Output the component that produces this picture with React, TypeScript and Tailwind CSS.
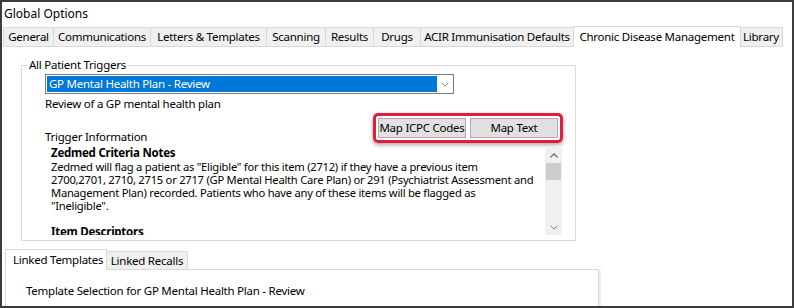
import React from "react";

const tabs = [
  { label: "General", w: "w-[51px]" },
  { label: "Communications", w: "w-[98px]" },
  { label: "Letters & Templates", w: "w-[117px]" },
  { label: "Scanning", w: "w-[60px]" },
  { label: "Results", w: "w-[49px]" },
  { label: "Drugs", w: "w-[48px]" },
  { label: "ACIR Immunisation Defaults", w: "w-[154px]" },
  { label: "Chronic Disease Management", w: "w-[168px]", active: true },
  { label: "Library", w: "w-[44px]" },
];

const noteLines = [
  'Zedmed will flag a patient as "Eligible" for this item (2712) if they have a previous item',
  "2700,2701, 2710, 2715 or 2717 (GP Mental Health Care Plan) or 291 (Psychiatrist Assessment and",
  "Management Plan) recorded. Patients who have any of these items will be flagged as",
  '"Ineligible".',
];

function Chevron({ dir = "down", className = "" }: { dir?: "up" | "down"; className?: string }) {
  return (
    <svg className={className} viewBox="0 0 10 6" fill="none" stroke="currentColor">
      <path
        d={dir === "down" ? "M1 1l4 4 4-4" : "M1 5l4-4 4 4"}
        strokeWidth={dir === "down" ? "1" : "1.6"}
        strokeLinecap="round"
        strokeLinejoin="round"
      />
    </svg>
  );
}

export default function App() {
  return (
    <div className="w-[794px] h-[308px] overflow-hidden bg-white border-2 border-[#3c3c3c] flex flex-col font-['Noto_Sans',sans-serif] text-[11.5px] tracking-[-0.25px] text-black">
      {/* Title */}
      <div className="h-[24px] shrink-0 flex items-center pl-[2px] text-[12px] tracking-normal leading-[16px]">
        Global Options
      </div>

      {/* Main tab strip */}
      <div className="h-[21px] shrink-0 flex items-end pl-px">
        {tabs.map((t) =>
          t.active ? (
            <div
              key={t.label}
              className={`${t.w} h-[21px] -mx-px relative z-10 bg-white border-x border-t border-[#d9d9d9] flex items-start justify-center pt-[2px] leading-[16px] whitespace-nowrap`}
            >
              {t.label}
            </div>
          ) : (
            <div
              key={t.label}
              className={`${t.w} h-[20px] bg-[#f0f0f0] border border-[#d9d9d9] -ml-px first:ml-0 flex items-center justify-center leading-[16px] whitespace-nowrap`}
            >
              {t.label}
            </div>
          )
        )}
      </div>

      {/* Tab page */}
      <div className="flex-1 flex flex-col">
        <fieldset className="ml-[19px] mt-[10px] w-[555px] min-w-0 border border-[#dcdcdc] pl-[5px] pr-[13px] pb-[5px]">
          <legend className="px-[2px] leading-[16px]">All Patient Triggers</legend>
          <div className="pl-[18px]">
            {/* Dropdown */}
            <div className="mt-px w-[409px] h-[20px] border border-[#7a7a7a] p-px flex bg-white">
              <div className="flex-1 bg-[#0078d7] text-white leading-[16px] pl-[2px]">
                GP Mental Health Plan - Review
              </div>
              <div className="w-[15px] flex items-center justify-center text-[#606060]">
                <Chevron className="w-[8px] h-[5px]" />
              </div>
            </div>

            <div className="mt-[2px] leading-[16px]">Review of a GP mental health plan</div>

            <div className="mt-px flex items-end justify-between">
              <div className="leading-[16px] -mb-[2px]">Trigger Information</div>
              <div className="h-[30px] border-[3px] border-[#e41b3e] rounded-[5px] shadow-[0_2px_4px_rgba(0,0,0,0.35)] p-[2px] flex gap-[4px] mr-[-1px]">
                <button className="w-[88px] h-[20px] bg-[#e1e1e1] border border-[#adadad] leading-[16px] whitespace-nowrap">
                  Map ICPC Codes
                </button>
                <button className="w-[88px] h-[20px] bg-[#e1e1e1] border border-[#adadad] leading-[16px]">
                  Map Text
                </button>
              </div>
            </div>

            {/* Notes box */}
            <div className="mt-[3px] h-[89px] flex overflow-hidden">
              <div className="flex-1 min-w-0 pl-[6px] overflow-hidden whitespace-nowrap text-[11.2px]">
                <div className="font-bold leading-[14px] text-[11.5px]">Zedmed Criteria Notes</div>
                {noteLines.map((l) => (
                  <div key={l} className="leading-[13px]">
                    {l}
                  </div>
                ))}
                <div className="h-[13px]" />
                <div className="font-bold leading-[13px] text-[11.5px]">Item Descriptors</div>
              </div>
              <div className="w-[17px] shrink-0 mt-px bg-[#f0f0f0] flex flex-col items-center">
                <div className="h-[16px] flex items-center justify-center text-[#606060]">
                  <Chevron dir="up" className="w-[8px] h-[5px]" />
                </div>
                <div className="w-[15px] h-[17px] bg-[#cdcdcd]" />
                <div className="flex-1" />
                <div className="h-[16px] flex items-center justify-center text-[#606060]">
                  <Chevron className="w-[8px] h-[5px]" />
                </div>
              </div>
            </div>
          </div>
        </fieldset>

        {/* Lower tabs */}
        <div className="mt-[8px] ml-[3px] w-[594px] h-[21px] flex items-end">
          <div className="w-[102px] h-[21px] bg-white border-x border-t border-[#d9d9d9] flex items-start pt-[2px] pl-[7px] leading-[16px] whitespace-nowrap">
            Linked Templates
          </div>
          <div className="w-[82px] h-[19px] -ml-px bg-[#f0f0f0] border border-[#d9d9d9] flex items-center justify-center leading-[16px] whitespace-nowrap">
            Linked Recalls
          </div>
          <div className="flex-1 h-px bg-[#d9d9d9]" />
        </div>
        <div className="ml-[3px] w-[594px] flex-1 border-x border-[#d9d9d9] shadow-[2px_0_0_#efefef] pt-[13px] pl-[20px] leading-[16px]">
          Template Selection for GP Mental Health Plan - Review
        </div>
      </div>
    </div>
  );
}
